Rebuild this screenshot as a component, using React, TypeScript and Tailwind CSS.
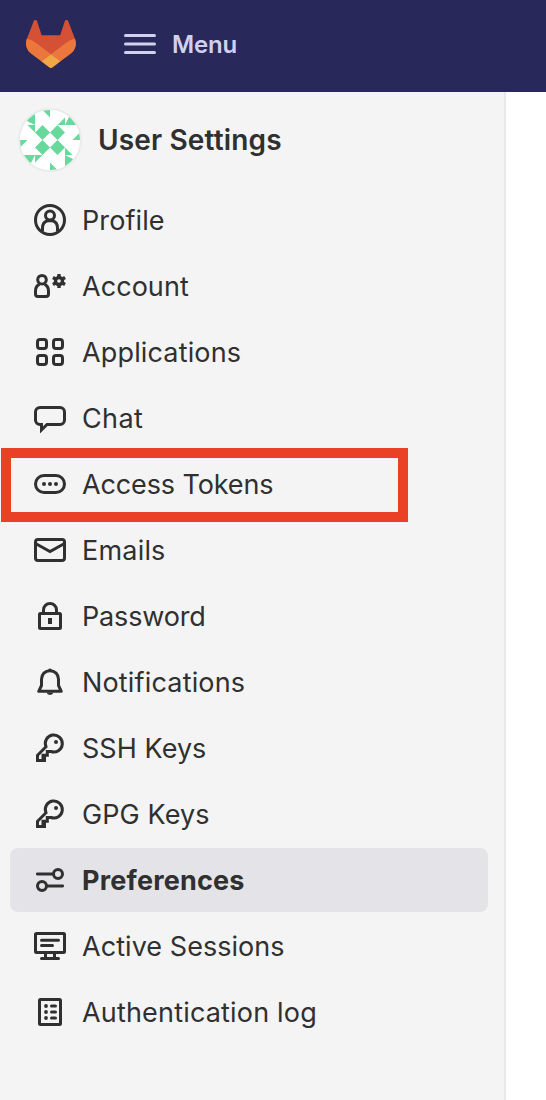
import type { ReactNode } from "react";

function Icon({ children }: { children: ReactNode }) {
  return (
    <svg
      className="size-8 shrink-0"
      viewBox="0 0 32 32"
      fill="none"
      stroke="currentColor"
      strokeWidth="3"
      aria-hidden="true"
    >
      {children}
    </svg>
  );
}

const keyIcon = (
  <Icon>
    <path d="M12 14.800 3.500 23.300v5.200h5.500v-5.300h4.300v-3.700H17A8.500 8.500 0 1 0 12 14.800Z" />
    <path d="M9 22h3v8H9Z" fill="currentColor" stroke="none" />
    <circle cx="22" cy="10" r="2" fill="currentColor" stroke="none" />
  </Icon>
);

const gearTeeth = [0, 60, 120];

type Item = { label: string; tracking: string; icon: ReactNode; active?: boolean; marked?: boolean };

const items: Item[] = [
  {
    label: "Profile",
    tracking: "tracking-[0.1px]",
    icon: (
      <Icon>
        <circle cx="16" cy="16" r="14.500" />
        <circle cx="16" cy="11.500" r="4.500" />
        <path d="M8.500 27.500V24c0-4 2.300-6.500 5-7.300h5c2.700.8 5 3.300 5 7.300v3.500" />
      </Icon>
    ),
  },
  {
    label: "Account",
    tracking: "tracking-[0.05px]",
    icon: (
      <Icon>
        <circle cx="8" cy="9.700" r="4.300" />
        <path d="M5.500 14.200C3 15.500 1.500 18 1.500 21v3a2.500 2.500 0 0 0 2.500 2.500h8a2.500 2.500 0 0 0 2.500-2.500v-3c0-3-1.500-5.500-4-6.800" />
        <circle cx="25" cy="11" r="3.500" strokeWidth="3.400" />
        {gearTeeth.map((a) => (
          <path key={a} d="M25 4v3M25 15v3" strokeWidth="3.400" transform={`rotate(${a} 25 11)`} />
        ))}
      </Icon>
    ),
  },
  {
    label: "Applications",
    tracking: "tracking-[0.15px]",
    icon: (
      <Icon>
        <rect x="3.500" y="3.500" width="9" height="9" rx="2.500" />
        <rect x="19.500" y="3.500" width="9" height="9" rx="2.500" />
        <rect x="3.500" y="19.500" width="9" height="9" rx="2.500" />
        <rect x="19.500" y="19.500" width="9" height="9" rx="2.500" />
      </Icon>
    ),
  },
  {
    label: "Chat",
    tracking: "tracking-[0.4px]",
    icon: (
      <Icon>
        <path d="M6 5.500h20a4.500 4.500 0 0 1 4.500 4.500v8a4.500 4.500 0 0 1-4.500 4.500H13l-5.500 5.500v-5.500H6A4.500 4.500 0 0 1 1.500 18v-8A4.500 4.500 0 0 1 6 5.500Z" />
      </Icon>
    ),
  },
  {
    label: "Access Tokens",
    tracking: "tracking-[-0.12px]",
    marked: true,
    icon: (
      <Icon>
        <rect x="1.500" y="7.500" width="29" height="17" rx="8.500" />
        <g fill="currentColor" stroke="none">
          <circle cx="10" cy="16" r="2" />
          <circle cx="16" cy="16" r="2" />
          <circle cx="22" cy="16" r="2" />
        </g>
      </Icon>
    ),
  },
  {
    label: "Emails",
    tracking: "tracking-[0.2px]",
    icon: (
      <Icon>
        <rect x="1.500" y="5.500" width="29" height="21" rx="2.500" />
        <path d="m1.500 9.500 14.500 8 14.500-8" />
      </Icon>
    ),
  },
  {
    label: "Password",
    tracking: "tracking-[-0.15px]",
    icon: (
      <Icon>
        <rect x="5.500" y="13.500" width="21" height="15" rx="1" />
        <path d="M9.500 13v-3a6.500 6.500 0 0 1 13 0v3" />
        <path d="M16 18v6" strokeWidth="4" />
      </Icon>
    ),
  },
  {
    label: "Notifications",
    tracking: "tracking-[0.17px]",
    icon: (
      <Icon>
        <path d="M16 4.700c-5 0-8.500 3.500-8.500 8.500v6.300L4.700 25.300h22.600L24.500 19.500v-6.300c0-5-3.500-8.500-8.500-8.500Z" strokeLinejoin="round" />
        <path d="M14 4.500a2 2 0 0 1 4 0ZM12.500 26.500a3.600 3.200 0 0 0 7 0Z" fill="currentColor" stroke="none" />
      </Icon>
    ),
  },
  { label: "SSH Keys", tracking: "tracking-[0.05px]", icon: keyIcon },
  { label: "GPG Keys", tracking: "tracking-[0.1px]", icon: keyIcon },
  {
    label: "Preferences",
    tracking: "tracking-[0.2px]",
    active: true,
    icon: (
      <Icon>
        <circle cx="24" cy="10" r="4.500" />
        <circle cx="8" cy="22" r="4.500" />
        <path d="M3.300 10h16M12.700 22h16" strokeWidth="2.800" strokeLinecap="round" />
      </Icon>
    ),
  },
  {
    label: "Active Sessions",
    tracking: "tracking-[0.05px]",
    icon: (
      <Icon>
        <rect x="1.500" y="3.500" width="29" height="19" rx="1" />
        <path d="M7.500 10.300h17M7.500 15.500h11M7.500 28.500h17" strokeLinecap="round" />
        <path d="M11.500 23v5M20.500 23v5" />
      </Icon>
    ),
  },
  {
    label: "Authentication log",
    tracking: "tracking-[0.18px]",
    icon: (
      <Icon>
        <rect x="5.500" y="3.500" width="21" height="25" rx="1" />
        <g fill="currentColor" stroke="none">
          <circle cx="12" cy="10" r="1.900" />
          <circle cx="12" cy="16" r="1.900" />
          <circle cx="12" cy="22" r="1.900" />
        </g>
        <path d="M17.500 10h4M17.500 16h4M17.500 22h4" strokeLinecap="round" />
      </Icon>
    ),
  },
];

function Logo() {
  return (
    <svg className="h-12 w-[50px] shrink-0" viewBox="0 0 25 24" aria-hidden="true">
      <path
        fill="#d45135"
        d="m24.507 9.5-.034-.09L21.082.562a.896.896 0 0 0-1.694.091l-2.290 7.010H7.825L5.535.653a.898.898 0 0 0-1.694-.09L.451 9.411.416 9.500a6.297 6.297 0 0 0 2.090 7.278l.012.010.030.022 5.160 3.867 2.560 1.935 1.554 1.176a1.051 1.051 0 0 0 1.268 0l1.555-1.176 2.560-1.935 5.197-3.890.014-.010A6.297 6.297 0 0 0 24.507 9.500Z"
      />
      <path
        fill="#ec773c"
        d="m24.507 9.500-.034-.090a11.440 11.440 0 0 0-4.560 2.051l-7.447 5.632 4.742 3.584 5.197-3.890.014-.010A6.297 6.297 0 0 0 24.507 9.500Z"
      />
      <path
        fill="#f1a743"
        d="m7.707 20.677 2.560 1.935 1.555 1.176a1.051 1.051 0 0 0 1.268 0l1.555-1.176 2.560-1.935-4.743-3.584-4.755 3.584Z"
      />
      <path
        fill="#ec773c"
        d="M5.010 11.461a11.430 11.430 0 0 0-4.560-2.050L.416 9.500a6.297 6.297 0 0 0 2.090 7.278l.012.010.030.022 5.160 3.867 4.745-3.584-7.444-5.632Z"
      />
    </svg>
  );
}

function Avatar() {
  return (
    <div className="size-16 shrink-0 rounded-full border-2 border-[#ebebeb] bg-white">
      <svg className="size-[60px] rounded-full" viewBox="0 0 60 60" fill="#68d89d" aria-hidden="true">
        {[0, 90, 180, 270].map((a) => (
          <path
            key={a}
            transform={`rotate(${a} 30 30)`}
            d="M22.500 15 30 22.500 22.500 30 15 22.500ZM22.500 0H30V7.500ZM15 0 0 7.500 15 15ZM7.500 15H15V22.500Z"
          />
        ))}
      </svg>
    </div>
  );
}

export default function App() {
  return (
    <div className="flex h-[1100px] w-[546px] flex-col overflow-hidden bg-white font-['Inter','Liberation_Sans',sans-serif] text-[27px] text-[#303030]">
      <header className="flex h-[92px] shrink-0 items-center bg-[#29285b] pb-1 pl-[26px]">
        <Logo />
        <button className="ml-12 flex items-center gap-4 text-[24px] font-semibold text-[#d1d0ee]">
          <svg className="h-5 w-8" viewBox="0 0 32 20" stroke="currentColor" strokeWidth="3" strokeLinecap="round" aria-hidden="true">
            <path d="M1.500 1.500h29M1.500 10h29M1.500 18.500h29" />
          </svg>
          <span className="pt-0.5 tracking-[-0.2px]">Menu</span>
        </button>
      </header>
      <aside className="w-[506px] grow border-r-2 border-[#e9e9e9] bg-[#f4f4f4]">
        <div className="flex h-24 items-center gap-4 pl-[18px]">
          <Avatar />
          <h1 className="text-[28px] font-semibold whitespace-nowrap tracking-[0.15px]">User Settings</h1>
        </div>
        <nav className="flex flex-col gap-0.5 pr-4 pl-2.5">
          {items.map((item) => (
            <a
              key={item.label}
              className={`relative flex h-16 items-center gap-4 rounded-lg pl-6 ${item.active ? "bg-[#e4e3e8] font-bold" : ""}`}
            >
              {item.icon}
              <span className={`pt-0.5 whitespace-nowrap ${item.tracking}`}>{item.label}</span>
              {item.marked && (
                <span className="absolute -top-1 -left-[9px] h-[74px] w-[407px] border-[10px] border-[#ea4025]" />
              )}
            </a>
          ))}
        </nav>
      </aside>
    </div>
  );
}
